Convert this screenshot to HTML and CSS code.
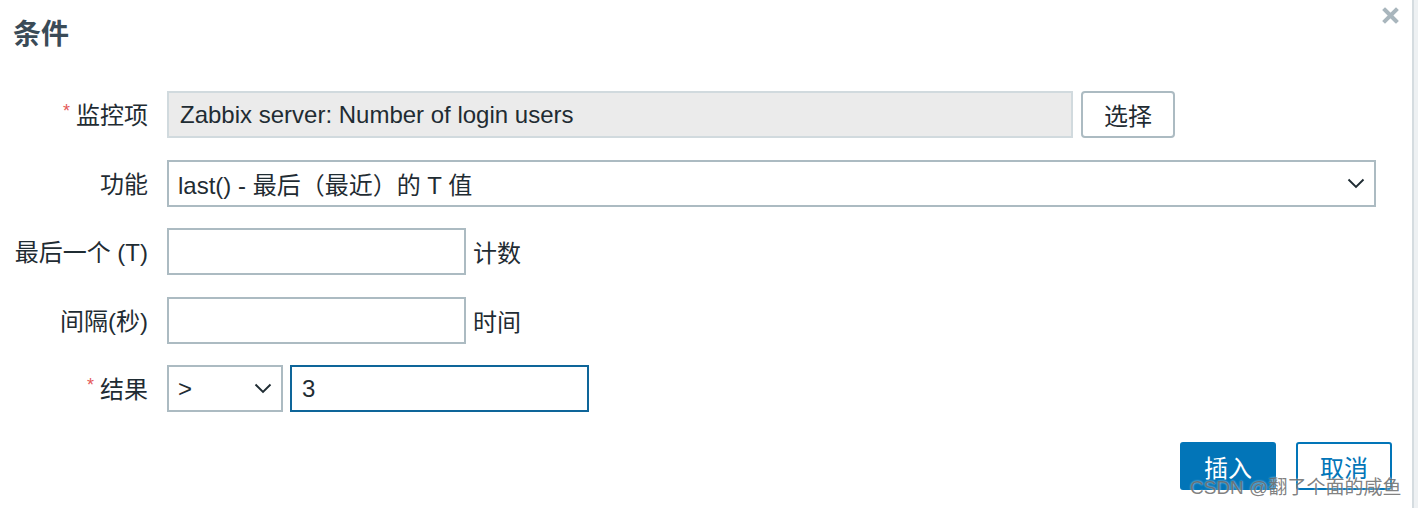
FILE: index.html
```html
<!DOCTYPE html>
<html lang="zh-CN">
<head>
<meta charset="utf-8">
<title>条件</title>
<link rel="stylesheet" href="styles.css">
</head>
<body>
<div class="page">
  <div class="dialog">
    <header class="dlg-head">
      <h2 class="dlg-title">条件</h2>
      <button class="close" type="button" aria-label="关闭">
        <svg width="17" height="17" viewBox="0 0 17 17"><path d="M3 3 L14 14 M14 3 L3 14" stroke="#a9b6bd" stroke-width="4" stroke-linecap="square" fill="none"/></svg>
      </button>
    </header>
    <form class="form">
      <label class="lbl"><span class="req">*</span>监控项</label>
      <div class="field">
        <div class="input ro item">Zabbix server: Number of login users</div>
        <button class="btn-alt" type="button">选择</button>
      </div>

      <label class="lbl">功能</label>
      <div class="field">
        <div class="select wide">
          <span class="sel-text">last() - 最后（最近）的 T 值</span>
          <svg class="chev" width="18" height="11" viewBox="0 0 18 11"><path d="M1.5 1.5 L9 9 L16.5 1.5" stroke="#1f2c33" stroke-width="1.9" fill="none"/></svg>
        </div>
      </div>

      <label class="lbl">最后一个 (T)</label>
      <div class="field">
        <input class="input num" type="text" value="">
        <span class="unit">计数</span>
      </div>

      <label class="lbl">间隔(秒)</label>
      <div class="field">
        <input class="input num" type="text" value="">
        <span class="unit">时间</span>
      </div>

      <label class="lbl"><span class="req">*</span>结果</label>
      <div class="field">
        <div class="select small">
          <span class="sel-text">&gt;</span>
          <svg class="chev" width="18" height="11" viewBox="0 0 18 11"><path d="M1.5 1.5 L9 9 L16.5 1.5" stroke="#1f2c33" stroke-width="1.9" fill="none"/></svg>
        </div>
        <input class="input num focus" type="text" value="3">
      </div>
    </form>
    <footer class="dlg-foot">
      <button class="btn primary" type="button">插入</button>
      <button class="btn outline" type="button">取消</button>
    </footer>
  </div>
  <div class="edge"></div>
</div>
<div class="watermark">CSDN @翻了个面的咸鱼</div>
</body>
</html>
```

FILE: styles.css
```css
* { box-sizing: border-box; }

html, body {
  margin: 0;
  padding: 0;
  background: #ffffff;
}

body {
  font-family: "Liberation Sans", Arial, "Noto Sans CJK SC", sans-serif;
  font-size: 24px;
  color: #1f2c33;
  position: relative;
  width: 1418px;
  height: 508px;
  overflow: hidden;
}

.page {
  display: flex;
  height: 508px;
}

.dialog {
  flex: 1;
  display: flex;
  flex-direction: column;
}

.edge {
  width: 6px;
  border-left: 2px solid #d5dce0;
  background: #eef1f3;
}

.dlg-head {
  height: 91px;
  display: flex;
  justify-content: space-between;
  align-items: flex-start;
  padding: 15px 13px 0 13px;
}

.dlg-title {
  margin: 0;
  font-size: 28px;
  line-height: 40px;
  font-weight: bold;
  color: #3a4b57;
}

.close {
  margin-top: -8px;
  padding: 0;
  border: 0;
  background: none;
  width: 17px;
  height: 17px;
  display: flex;
}

.form {
  display: grid;
  grid-template-columns: 148px 1209px;
  grid-auto-rows: 47px;
  column-gap: 19px;
  row-gap: 21.5px;
  margin: 0;
}

.lbl {
  display: flex;
  align-items: center;
  justify-content: flex-end;
  white-space: nowrap;
  color: #1f2c33;
  padding-bottom: 2px;
}

.req {
  color: #e45959;
  font-size: 18px;
  margin-right: 6px;
  position: relative;
  top: -2px;
}

.field {
  display: flex;
  align-items: stretch;
  gap: 7px;
}

.input {
  height: 47px;
  border: 2px solid #acbbc2;
  background: #ffffff;
  font: inherit;
  color: #1f2c33;
  padding: 0 10px;
  margin: 0;
  outline: none;
  display: flex;
  align-items: center;
}

.input.ro {
  background: #ebebeb;
  border-color: #d1dade;
  padding: 0 11px;
}

.item {
  width: 906px;
}

.num {
  width: 299px;
}

.input.focus {
  border-color: #0e6599;
}

.btn-alt {
  width: 94px;
  margin-left: 1px;
  border: 2px solid #acbbc2;
  border-radius: 4px;
  background: #ffffff;
  font: inherit;
  color: #1f2c33;
  padding: 0;
}

.select {
  height: 47px;
  border: 2px solid #acbbc2;
  background: #ffffff;
  display: flex;
  align-items: center;
  justify-content: space-between;
  padding: 0 9px 0 9px;
}

.select.wide {
  width: 1209px;
}

.select.small {
  width: 116px;
}

.chev {
  flex: none;
}

.unit {
  display: flex;
  align-items: center;
  color: #1f2c33;
}

.dlg-foot {
  display: flex;
  justify-content: flex-end;
  gap: 20px;
  padding: 30px 20px 0 0;
}

.btn {
  width: 96px;
  height: 48px;
  border-radius: 3px;
  font: inherit;
  padding: 0;
}

.btn.primary {
  background: #0275b8;
  border: 2px solid #0275b8;
  color: #ffffff;
}

.btn.outline {
  background: #ffffff;
  border: 2px solid #0275b8;
  color: #0275b8;
}

.watermark {
  position: absolute;
  left: 1190px;
  top: 476px;
  font-size: 19px;
  line-height: 24px;
  color: rgba(95, 95, 95, 0.8);
  text-shadow: 0 0 2px rgba(255, 255, 255, 0.8);
  white-space: nowrap;
  pointer-events: none;
}
```
